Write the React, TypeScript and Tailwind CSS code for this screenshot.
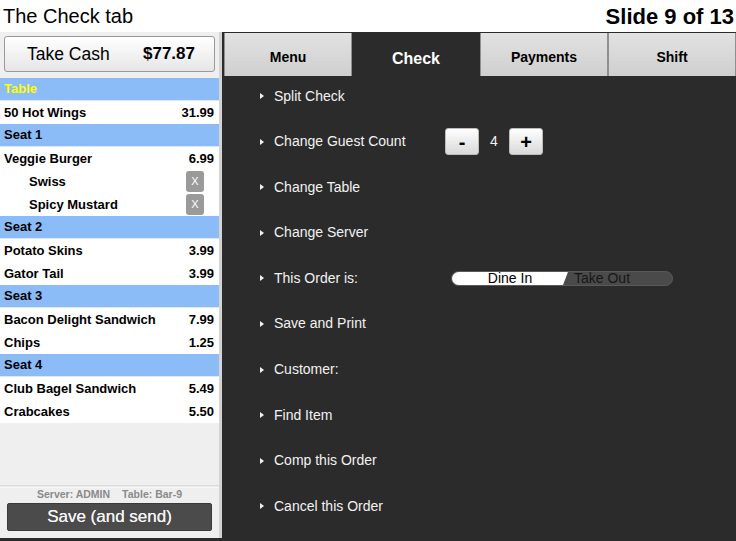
import React from 'react';

type Row =
  | { kind: 'head'; label: string; yellow?: boolean }
  | { kind: 'item'; label: string; price: string }
  | { kind: 'mod'; label: string };

const rows: Row[] = [
  { kind: 'head', label: 'Table', yellow: true },
  { kind: 'item', label: '50 Hot Wings', price: '31.99' },
  { kind: 'head', label: 'Seat 1' },
  { kind: 'item', label: 'Veggie Burger', price: '6.99' },
  { kind: 'mod', label: 'Swiss' },
  { kind: 'mod', label: 'Spicy Mustard' },
  { kind: 'head', label: 'Seat 2' },
  { kind: 'item', label: 'Potato Skins', price: '3.99' },
  { kind: 'item', label: 'Gator Tail', price: '3.99' },
  { kind: 'head', label: 'Seat 3' },
  { kind: 'item', label: 'Bacon Delight Sandwich', price: '7.99' },
  { kind: 'item', label: 'Chips', price: '1.25' },
  { kind: 'head', label: 'Seat 4' },
  { kind: 'item', label: 'Club Bagel Sandwich', price: '5.49' },
  { kind: 'item', label: 'Crabcakes', price: '5.50' },
];

const tabs = ['Menu', 'Check', 'Payments', 'Shift'];

const Bullet = () => (
  <svg width="4" height="6" viewBox="0 0 4 6" className="shrink-0">
    <path d="M0 0 L4 3 L0 6 Z" fill="#f2f2f2" />
  </svg>
);

const CheckRow = ({ row }: { row: Row }) => {
  if (row.kind === 'head') {
    return (
      <div className="h-[23px] bg-[#8bbcf7] flex items-center px-[4px] border-b border-[#dce9f8]">
        <span className={`text-[13px] font-bold ${row.yellow ? 'text-[#ffff00]' : 'text-black'}`}>{row.label}</span>
      </div>
    );
  }
  if (row.kind === 'mod') {
    return (
      <div className="h-[23px] bg-white flex items-center justify-between pl-[29px] pr-[15px]">
        <span className="text-[13px] font-bold text-black">{row.label}</span>
        <span className="w-[18px] h-[21px] rounded-[3px] bg-[#9a9a9a] text-white text-[11px] flex items-center justify-center">X</span>
      </div>
    );
  }
  return (
    <div className="h-[23px] bg-white flex items-center justify-between px-[4px] pr-[5px]">
      <span className="text-[13px] font-bold text-black">{row.label}</span>
      <span className="text-[13px] font-bold text-black">{row.price}</span>
    </div>
  );
};

const SmallBtn = ({ children }: { children: React.ReactNode }) => (
  <button className="w-[34px] h-[27px] rounded-[3px] bg-gradient-to-b from-white to-[#d9d9d9] border border-[#bdbdbd] text-black text-[20px] font-bold leading-none flex items-center justify-center">
    {children}
  </button>
);

export default function App() {
  return (
    <div className="w-[736px] h-[541px] bg-white flex flex-col overflow-hidden font-['Liberation_Sans',Arial,sans-serif]">
      <header className="h-[32px] flex items-center justify-between pl-[3px] pr-[2px]">
        <span className="text-[20px] text-black">The Check tab</span>
        <span className="text-[22px] font-bold text-black">Slide 9 of 13</span>
      </header>

      <div className="flex-1 flex bg-[#2b2b2b]">
        {/* left check panel */}
        <div className="w-[222px] h-[506px] bg-[#efefef] border-r-[3px] border-[#d4d4d4] flex flex-col">
          <div className="px-[4px] pt-[4px]">
            <button className="w-full h-[36px] rounded-[3px] border border-[#9a9a9a] bg-gradient-to-b from-white to-[#e6e6e6] flex items-center justify-between pl-[22px] pr-[19px]">
              <span className="text-[17.5px] text-black">Take Cash</span>
              <span className="text-[17px] font-bold text-black">$77.87</span>
            </button>
          </div>
          <div className="mt-[6px] flex flex-col">
            {rows.map((r, i) => (
              <CheckRow key={i} row={r} />
            ))}
          </div>
          <div className="flex-1" />
          <div className="h-[3px] bg-gradient-to-b from-[#d6d6d6] to-white" />
          <div className="h-[13px] flex items-center justify-center gap-[12px] text-[10.5px] font-bold text-[#8a8a8a]">
            <span>Server: ADMIN</span>
            <span>Table: Bar-9</span>
          </div>
          <div className="px-[7px] pt-[2px] pb-[7px]">
            <button className="w-full h-[28px] rounded-[2px] bg-[#4b4b4b] border border-[#3a3a3a] text-[17px] text-[#f4f4f4] flex items-center justify-center [text-shadow:0_0_0.4px_#f4f4f4]">
              Save (and send)
            </button>
          </div>
        </div>

        {/* right panel */}
        <div className="flex-1 flex flex-col pl-[2px]">
          <div className="h-[44px] flex pt-[1px]">
            {tabs.map(t =>
              t === 'Check' ? (
                <div key={t} className="w-[128px] bg-[#2b2b2b] flex items-center justify-center pt-[8px]">
                  <span className="text-[16px] font-bold text-white">{t}</span>
                </div>
              ) : (
                <div key={t} className="w-[128px] bg-gradient-to-b from-[#e2e2e2] to-[#cfcfcf] border-x border-[#8f8f8f] flex items-center justify-center pt-[6px]">
                  <span className="text-[14px] font-bold text-black">{t}</span>
                </div>
              )
            )}
          </div>

          <div className="flex flex-col pt-[8px] pl-[36px] gap-[21.6px]">
            <div className="h-[24px] flex items-center gap-[10px]">
              <Bullet />
              <span className="text-[14px] text-[#f2f2f2]">Split Check</span>
            </div>
            <div className="h-[24px] flex items-center gap-[10px]">
              <Bullet />
              <span className="w-[161px] text-[14px] text-[#f2f2f2]">Change Guest Count</span>
              <div className="flex items-center gap-[11px]">
                <SmallBtn>-</SmallBtn>
                <span className="text-[14px] text-[#f2f2f2] w-[8px]">4</span>
                <SmallBtn>+</SmallBtn>
              </div>
            </div>
            <div className="h-[24px] flex items-center gap-[10px]">
              <Bullet />
              <span className="text-[14px] text-[#f2f2f2]">Change Table</span>
            </div>
            <div className="h-[24px] flex items-center gap-[10px]">
              <Bullet />
              <span className="text-[14px] text-[#f2f2f2]">Change Server</span>
            </div>
            <div className="h-[24px] flex items-center gap-[10px]">
              <Bullet />
              <span className="w-[167px] text-[14px] text-[#f2f2f2]">This Order is:</span>
              <div className="w-[222px] h-[15px] rounded-full bg-[#4a4a4a] border border-[#5a5a5a] overflow-hidden flex">
                <div className="w-[116px] h-full bg-white flex items-center justify-center [clip-path:polygon(0_0,100%_0,calc(100%-5px)_100%,0_100%)]">
                  <span className="text-[14px] text-black leading-none">Dine In</span>
                </div>
                <div className="flex-1 flex items-center pl-[6px]">
                  <span className="text-[14px] text-[#161616] leading-none">Take Out</span>
                </div>
              </div>
            </div>
            {['Save and Print', 'Customer:', 'Find Item', 'Comp this Order', 'Cancel this Order'].map(l => (
              <div key={l} className="h-[24px] flex items-center gap-[10px]">
                <Bullet />
                <span className="text-[14px] text-[#f2f2f2]">{l}</span>
              </div>
            ))}
          </div>
        </div>
      </div>
    </div>
  );
}
